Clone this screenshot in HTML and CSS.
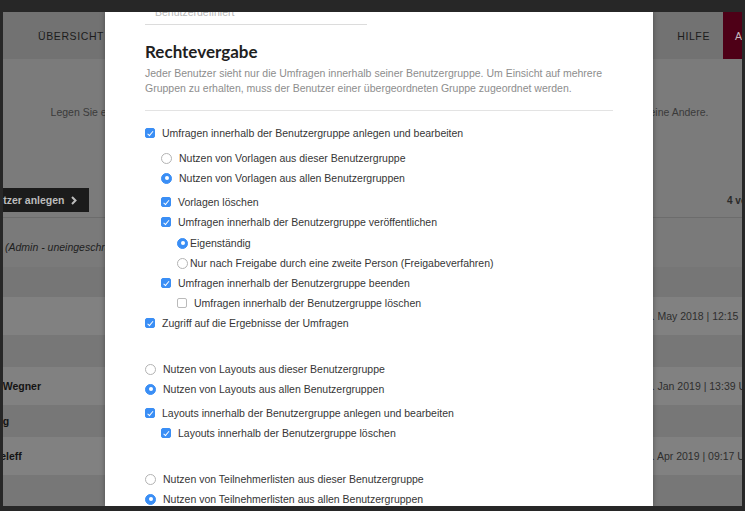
FILE: index.html
```html
<!DOCTYPE html>
<html>

<head>
  <meta charset="UTF-8">
  <title>Benutzerverwaltung</title>
  <link rel="stylesheet" href="styles.css">
</head>

<body>
  <div class="screen">
    <div class="app">
      <header class="nav">
        <a class="nav__item">Übersicht</a>
        <a class="nav__item nav__item--help">Hilfe</a>
        <a class="nav__account">Account</a>
      </header>

      <main class="content">
        <p class="intro">Legen Sie einen neuen Benutzer an oder bearbeiten Sie bestehende Benutzer. Um die Gruppe zu wechseln, wählen Sie einfach eine Andere.</p>

        <div class="toolbar">
          <button class="btn">Neuen Benutzer anlegen
            <svg width="6" height="9" viewBox="0 0 6 9"><path d="M1 1l3.5 3.5L1 8" fill="none" stroke="currentColor" stroke-width="2"/></svg>
          </button>
          <button class="btn">Gruppe anlegen</button>
          <span class="pager">4 von 4</span>
        </div>

        <div class="table">
          <div class="table__group"><em>(Admin - uneingeschränkt)</em></div>
          <div class="table__row table__row--head"></div>
          <div class="table__row">
            <span class="table__name"></span>
            <span class="table__date">14. May 2018 | 12:15 Uhr</span>
          </div>
          <div class="table__row table__row--dark"></div>
          <div class="table__row">
            <span class="table__name">Markus Wegner</span>
            <span class="table__date">24. Jan 2019 | 13:39 Uhr</span>
          </div>
          <div class="table__row table__row--dark">
            <span class="table__name">Beratung</span>
          </div>
          <div class="table__row">
            <span class="table__name">Frank Teleff</span>
            <span class="table__date">13. Apr 2019 | 09:17 Uhr</span>
          </div>
          <div class="table__row table__row--dark"></div>
        </div>
      </main>

      <!-- Modal: Benutzer bearbeiten -->
      <div class="modal">
        <div class="modal__body">
          <div class="field">Benutzerdefiniert</div>

          <h2 class="modal__title">Rechtevergabe</h2>
          <p class="modal__desc">Jeder Benutzer sieht nur die Umfragen innerhalb seiner Benutzergruppe. Um Einsicht auf mehrere Gruppen zu erhalten, muss der Benutzer einer übergeordneten Gruppe zugeordnet werden.</p>

          <div class="rights">
            <label class="row"><span class="check check--on"></span>Umfragen innerhalb der Benutzergruppe anlegen und bearbeiten</label>
            <div class="sub">
              <div class="choice">
                <label class="row"><span class="radio"></span>Nutzen von Vorlagen aus dieser Benutzergruppe</label>
                <label class="row"><span class="radio radio--on"></span>Nutzen von Vorlagen aus allen Benutzergruppen</label>
              </div>
              <label class="row"><span class="check check--on"></span>Vorlagen löschen</label>
              <label class="row"><span class="check check--on"></span>Umfragen innerhalb der Benutzergruppe veröffentlichen</label>
              <div class="sub sub--tight">
                <label class="row row--tight"><span class="radio radio--on"></span>Eigenständig</label>
                <label class="row row--tight"><span class="radio"></span>Nur nach Freigabe durch eine zweite Person (Freigabeverfahren)</label>
              </div>
              <label class="row"><span class="check check--on"></span>Umfragen innerhalb der Benutzergruppe beenden</label>
              <div class="sub">
                <label class="row"><span class="check"></span>Umfragen innerhalb der Benutzergruppe löschen</label>
              </div>
            </div>
            <label class="row"><span class="check check--on"></span>Zugriff auf die Ergebnisse der Umfragen</label>
          </div>

          <div class="rights rights--next">
            <div class="choice">
              <label class="row"><span class="radio"></span>Nutzen von Layouts aus dieser Benutzergruppe</label>
              <label class="row"><span class="radio radio--on"></span>Nutzen von Layouts aus allen Benutzergruppen</label>
            </div>
            <label class="row"><span class="check check--on"></span>Layouts innerhalb der Benutzergruppe anlegen und bearbeiten</label>
            <div class="sub">
              <label class="row"><span class="check check--on"></span>Layouts innerhalb der Benutzergruppe löschen</label>
            </div>
          </div>

          <div class="rights rights--next">
            <div class="choice">
              <label class="row"><span class="radio"></span>Nutzen von Teilnehmerlisten aus dieser Benutzergruppe</label>
              <label class="row"><span class="radio radio--on"></span>Nutzen von Teilnehmerlisten aus allen Benutzergruppen</label>
            </div>
          </div>
        </div>
      </div>
    </div>
  </div>
</body>

</html>
```

FILE: styles.css
```css
body {
  margin: 0;
  background-color: #272727;
  font-family: "Liberation Sans", Arial, sans-serif;
  font-size: 10.5px;
  overflow: hidden;
}

.screen {
  height: 511px;
  padding: 12px 3px 5px;
  box-sizing: border-box;
}

.app {
  position: relative;
  height: 100%;
  overflow: hidden;
  background-color: #7b7b7b;
}

/* Navigation (abgedunkelt hinter dem Modal) */
.nav {
  display: flex;
  align-items: center;
  height: 47px;
  margin-right: -83px;
  padding-left: 35px;
  background-color: #727272;
}

.nav__item {
  font-size: 10.5px;
  letter-spacing: 0.6px;
  text-transform: uppercase;
  color: #1c1c1c;
}

.nav__item--help {
  margin-left: auto;
  margin-right: 13px;
}

.nav__account {
  flex: none;
  align-self: stretch;
  display: flex;
  align-items: center;
  width: 90px;
  padding-left: 12px;
  background-color: #4e0017;
  color: #c9b9bd;
  font-size: 10.5px;
  letter-spacing: 0.6px;
  text-transform: uppercase;
}

.content {
  color: #333;
}

.intro {
  margin: 46px 0 0;
  padding-left: 14px;
  line-height: 14px;
  text-align: center;
  white-space: nowrap;
  color: #3a3a3a;
}

.toolbar {
  display: flex;
  align-items: center;
  column-gap: 20px;
  margin: 69px -30px 0 -73px;
}

.btn {
  display: flex;
  align-items: center;
  column-gap: 6px;
  height: 24px;
  padding: 0 12px;
  border: 0;
  background-color: #1b1b1b;
  color: #bdbdbd;
  font-family: inherit;
  font-size: 10.5px;
  font-weight: bold;
}

.pager {
  margin-left: auto;
  width: 45px;
  white-space: nowrap;
  font-weight: bold;
  color: #2a2a2a;
  font-size: 10px;
}

.table {
  margin: 5px -30px 0 -40px;
  border-top: 1px solid #6c6c6c;
}

.table__group {
  height: 49px;
  padding: 23px 0 0 42px;
  box-sizing: border-box;
  line-height: 13px;
  color: #1e1e1e;
  background-color: #7a7a7a;
}

.table__group em {
  font-style: italic;
}

.table__row {
  display: flex;
  align-items: center;
  height: 38px;
  background-color: #818181;
}

.table__row--head {
  height: 30px;
  background-color: #767676;
}

.table__row--dark {
  height: 32px;
  background-color: #777;
}

.table__name {
  flex: 1;
  font-weight: bold;
  color: #141414;
}

.table__date {
  width: 132px;
  white-space: nowrap;
  color: #2e2e2e;
}

/* Modal */
.modal {
  position: absolute;
  top: 0;
  bottom: 0;
  left: 102px;
  width: 548px;
  background-color: #fff;
  overflow: hidden;
  box-shadow: 0 0 5px rgba(0, 0, 0, 0.35);
}

.modal__body {
  margin-top: -10px;
  padding: 0 40px;
}

.field {
  width: 202px;
  padding: 0 10px 2px;
  line-height: 20px;
  border-bottom: 1px solid #dcdcdc;
  color: #b9b9b9;
}

.modal__title {
  margin: 17px 0 0;
  font-family: Lato, "Liberation Sans", sans-serif;
  font-size: 17px;
  line-height: 20px;
  font-weight: bold;
  color: #1f1f1f;
}

.modal__desc {
  margin: 4px 0 0;
  padding-bottom: 14px;
  border-bottom: 1px solid #e3e3e3;
  line-height: 15px;
  color: #8d8d8d;
}

.rights {
  margin-top: 12px;
}

.rights--next {
  margin-top: 26px;
}

.row {
  display: flex;
  align-items: center;
  column-gap: 7px;
  line-height: 20px;
  color: #363636;
}

.row--tight {
  column-gap: 2px;
}

.sub {
  padding-left: 16px;
}

.sub--tight {
  padding-top: 1px;
}

.choice {
  margin: 5px 0 4px;
}

.rights--next > .choice:first-child {
  margin-top: 0;
}

.check {
  position: relative;
  flex: none;
  width: 10px;
  height: 10px;
  box-sizing: border-box;
  border: 1px solid #bababa;
  border-radius: 2px;
  background-color: #fff;
}

.check--on {
  border-color: #3a8ef5;
  background-color: #3a8ef5;
}

.check--on::after {
  content: '';
  position: absolute;
  left: 2.5px;
  top: 0.5px;
  width: 2px;
  height: 4.5px;
  border: solid #fff;
  border-width: 0 1.5px 1.5px 0;
  transform: rotate(40deg);
}

.radio {
  position: relative;
  flex: none;
  width: 11px;
  height: 11px;
  box-sizing: border-box;
  border: 1px solid #b3b3b3;
  border-radius: 50%;
  background-color: #fff;
}

.radio--on {
  border-color: #3a8ef5;
  background-color: #3a8ef5;
}

.radio--on::after {
  content: '';
  position: absolute;
  left: 2.5px;
  top: 2.5px;
  width: 4px;
  height: 4px;
  border-radius: 50%;
  background-color: #fff;
}
```
